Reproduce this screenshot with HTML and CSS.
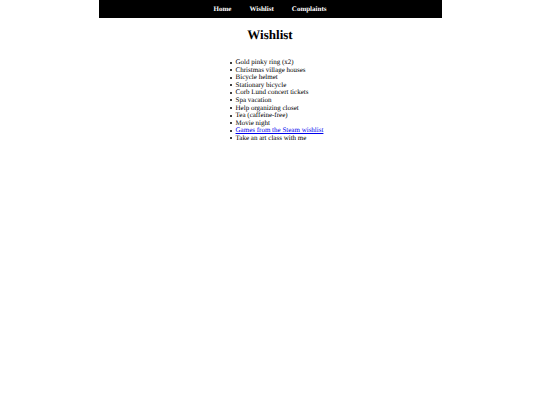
FILE: index.html
```html
<!DOCTYPE html>
<html lang="en">
<head>
<meta charset="utf-8">
<title>Wishlist</title>
<link rel="stylesheet" href="styles.css">
</head>
<body>
<div class="page">
  <nav class="nav">
    <a href="#home">Home</a>
    <a href="#wishlist">Wishlist</a>
    <a href="#complaints">Complaints</a>
  </nav>
  <main class="content">
    <h1>Wishlist</h1>
    <ul class="wishes">
      <li>Gold pinky ring (x2)</li>
      <li>Christmas village houses</li>
      <li>Bicycle helmet</li>
      <li>Stationary bicycle</li>
      <li>Corb Lund concert tickets</li>
      <li>Spa vacation</li>
      <li>Help organizing closet</li>
      <li>Tea (caffeine-free)</li>
      <li>Movie night</li>
      <li><a href="#games">Games from the Steam wishlist</a></li>
      <li>Take an art class with me</li>
    </ul>
  </main>
</div>
</body>
</html>
```
FILE: styles.css
```css
body {
  margin: 0;
  background: #fff;
  color: #000;
  font-family: "Liberation Serif", serif;
  text-rendering: geometricPrecision;
}

.page {
  max-width: 343px;
  margin: 0 auto;
}

.nav {
  display: flex;
  justify-content: center;
  gap: 18px;
  padding: 5px 0;
  background: #000;
  font-size: 7px;
  font-weight: bold;
  line-height: 8px;
}

.nav a {
  color: #fff;
  text-decoration: none;
}

.content {
  display: flex;
  flex-direction: column;
  align-items: center;
}

h1 {
  margin: 9px 0 16px;
  font-size: 13px;
  line-height: 16px;
}

.wishes {
  display: grid;
  grid-auto-rows: 1fr;
  min-height: 83px;
  margin: 0;
  padding: 0 0 0 13px;
  font-size: 7px;
  line-height: 7px;
  list-style: none;
}

.wishes li {
  display: flex;
  align-items: center;
  gap: 4px;
}

.wishes li::before {
  content: "";
  width: 2px;
  height: 2px;
  border-radius: 1px;
  background: #000;
}

.wishes a {
  color: #00e;
}
```
